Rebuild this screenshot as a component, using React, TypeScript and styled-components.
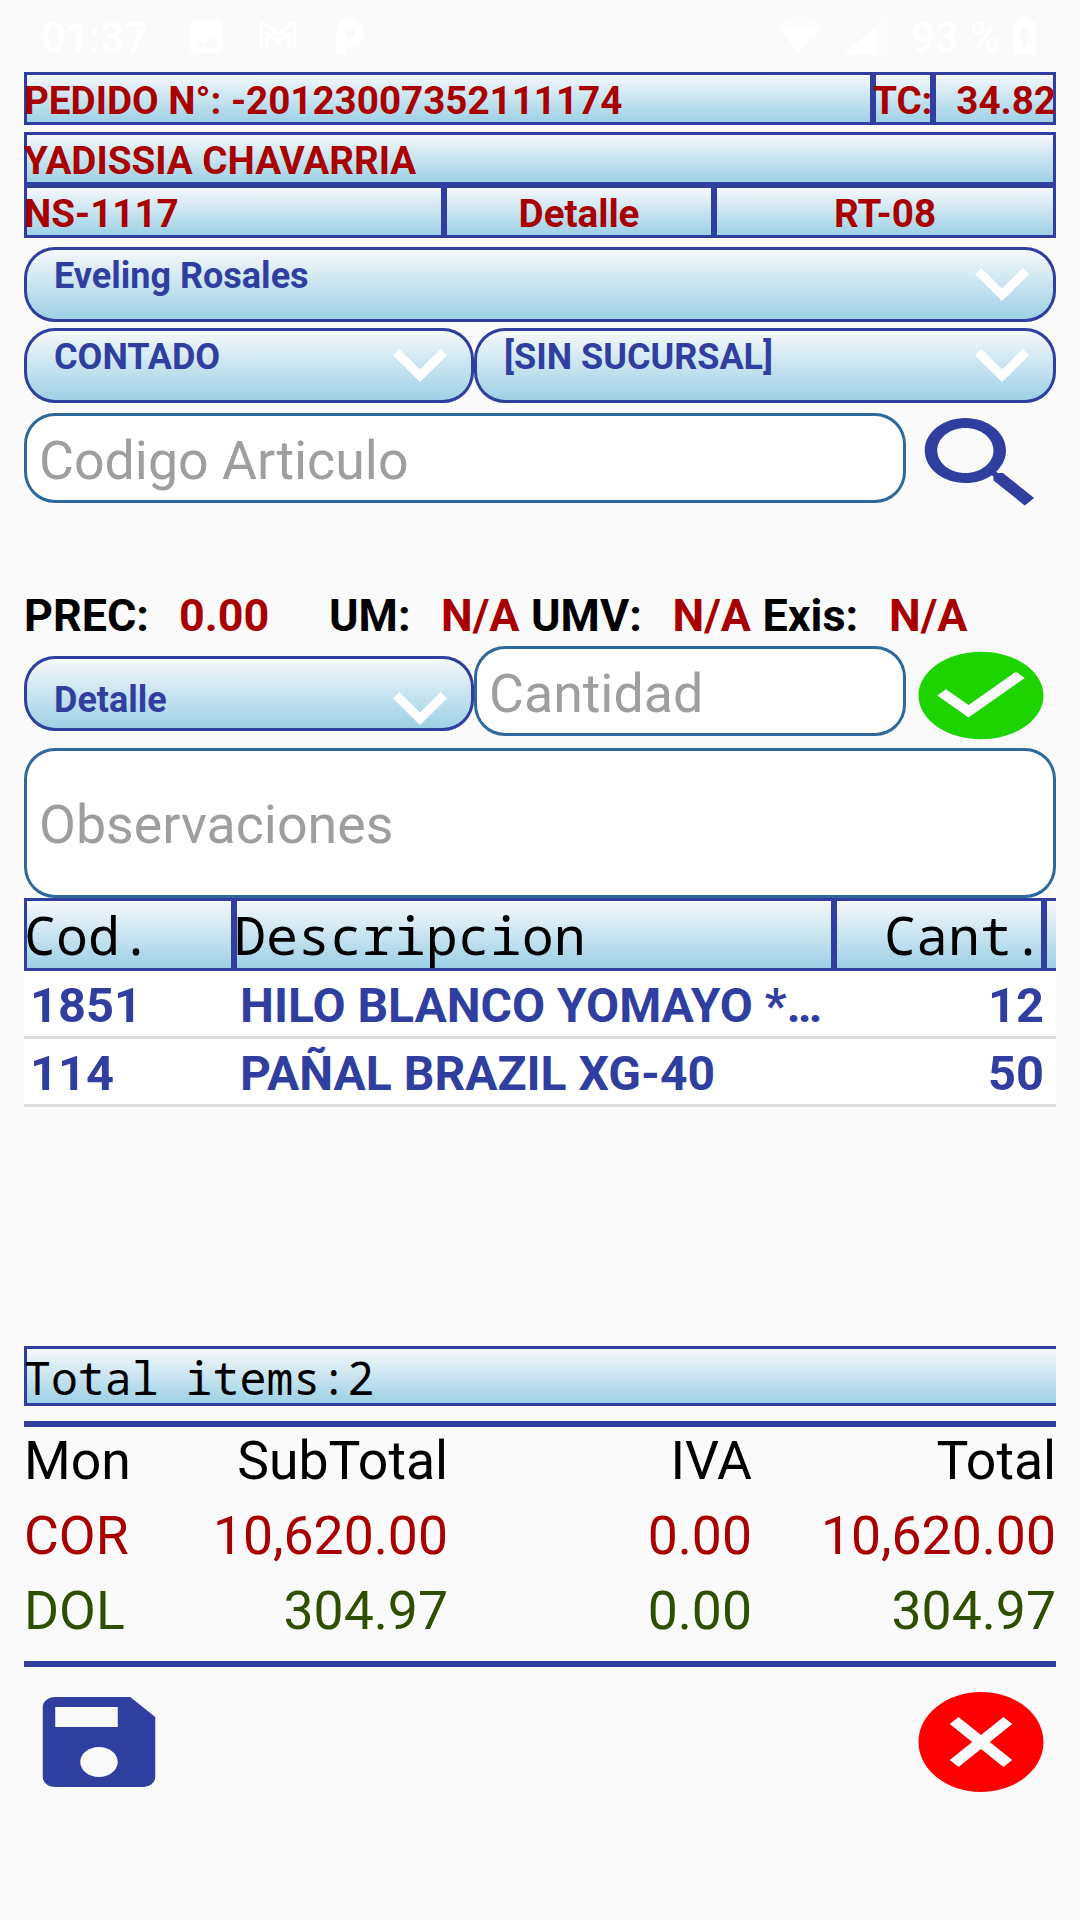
import React from 'react';
import styled, { createGlobalStyle } from 'styled-components';

const INDIGO = '#303f9f';
const STEEL = '#2f699b';
const RED = '#a80000';
const GREEN = '#2f4f00';
const PAPER = '#fafafa';
const GLOSS = 'linear-gradient(180deg, #fafafc 0%, #98cfe4 100%)';
const SANS = 'Roboto, "Liberation Sans", sans-serif';
const MONO = '"Noto Sans Mono", "Droid Sans Mono", "DejaVu Sans Mono", monospace';

const GlobalStyle = createGlobalStyle`
  *, *::before, *::after { box-sizing: border-box; }
  html, body { margin: 0; padding: 0; background: ${PAPER}; }
  svg { display: block; flex: none; }
`;

const Screen = styled.main`
  width: 1080px;
  height: 1920px;
  padding: 0 24px;
  overflow: hidden;
  display: flex;
  flex-direction: column;
  background: ${PAPER};
  font-family: ${SANS};
  color: #000;
  white-space: nowrap;
`;

/* ---------- status bar ---------- */

const StatusBar = styled.header`
  flex: none;
  height: 72px;
  padding: 0 20px 0 17.5px;
  display: flex;
  justify-content: space-between;
  color: #fff;
  font-size: 42.2px;
  font-weight: 500;
  line-height: 75px;
`;

const StatusGroup = styled.div`
  display: flex;
  align-items: flex-start;
`;

const StatusIcon = styled.svg<{ $top: number; $left: number }>`
  margin-top: ${(p) => p.$top}px;
  margin-left: ${(p) => p.$left}px;
`;

const Clock = styled.span`
  width: 108px;
`;

const Charge = styled.span`
  width: 90px;
  margin-left: 24px;
`;

/* ---------- glossy cells ---------- */

const CellRow = styled.div<{ $columns: string; $gap?: number }>`
  flex: none;
  display: grid;
  grid-template-columns: ${(p) => p.$columns};
  margin-top: ${(p) => p.$gap ?? 0}px;
`;

const Cell = styled.div<{ $align?: string }>`
  height: 53px;
  background: ${GLOSS};
  box-shadow: inset 0 0 0 3px ${INDIGO};
  color: ${RED};
  font-size: 38.6px;
  font-weight: 700;
  line-height: 58px;
  text-align: ${(p) => p.$align ?? 'left'};
`;

/* ---------- form ---------- */

const FormRow = styled.div<{ $gap: number; $height: number }>`
  flex: none;
  display: flex;
  align-items: flex-start;
  height: ${(p) => p.$height}px;
  margin-top: ${(p) => p.$gap}px;
`;

const Picker = styled.div<{ $width: number; $drop?: number }>`
  flex: none;
  width: ${(p) => p.$width}px;
  height: 75px;
  padding: ${(p) => p.$drop ?? 0}px 27px 0 30px;
  display: flex;
  justify-content: space-between;
  border-radius: 31px;
  background: ${GLOSS};
  box-shadow: inset 0 0 0 3px ${INDIGO};
  color: ${INDIGO};
  font-size: 36px;
  font-weight: 700;
  line-height: 58px;
`;

const Chevron = styled.svg`
  margin-top: 21px;
`;

const Field = styled.div<{ $width: number; $height: number; $line: number; $top?: number }>`
  flex: none;
  width: ${(p) => p.$width}px;
  height: ${(p) => p.$height}px;
  margin-top: ${(p) => p.$top ?? 0}px;
  padding-left: 15px;
  border-radius: 31px;
  background: #fff;
  box-shadow: inset 0 0 0 3px ${STEEL};
  color: #9e9e9e;
  font-size: 53.7px;
  line-height: ${(p) => p.$line}px;
`;

const IconButton = styled.button<{ $height: number }>`
  flex: none;
  width: 150px;
  height: ${(p) => p.$height}px;
  padding: 0;
  border: 0;
  background: none;
`;

const InfoRow = styled.div`
  flex: none;
  display: grid;
  grid-template-columns: 155px 150px 112px 90px 141.5px 90px 126.5px 1fr;
  margin-top: 68px;
  height: 50px;
  font-size: 44.9px;
  font-weight: 700;
  line-height: 50px;
`;

const InfoValue = styled.span`
  color: ${RED};
`;

/* ---------- article list ---------- */

const HeadCell = styled.div<{ $align?: string; $open?: boolean; $small?: boolean }>`
  height: ${(p) => (p.$small ? 60 : 73)}px;
  background: ${GLOSS};
  box-shadow: ${(p) =>
    p.$open
      ? `inset 3px 3px 0 ${INDIGO}, inset 0 -3px 0 ${INDIGO}`
      : `inset 0 0 0 3px ${INDIGO}`};
  font-family: ${MONO};
  font-size: ${(p) => (p.$small ? 44.9 : 53.3)}px;
  line-height: ${(p) => (p.$small ? 63 : 74)}px;
  text-align: ${(p) => p.$align ?? 'left'};
`;

const ItemList = styled.section`
  flex: none;
  height: 375px;
`;

const Item = styled.div`
  display: grid;
  grid-template-columns: 210px 600px 210px;
  height: 68px;
  width: 1032px;
  overflow: hidden;
  border-bottom: 3px solid #dcdcdc;
  background: #fff;
  color: ${INDIGO};
  font-weight: 700;
  line-height: 69px;
`;

const ItemCell = styled.span<{ $right?: boolean; $name?: boolean }>`
  padding-left: 6px;
  font-size: ${(p) => (p.$name ? 48 : 48.8)}px;
  ${(p) => p.$right && 'text-align: right;'}
`;

/* ---------- totals ---------- */

const Totals = styled.section`
  flex: none;
  height: 246px;
  margin-top: 15px;
  border-top: 6px solid ${INDIGO};
  border-bottom: 6px solid ${INDIGO};
`;

const TotalsRow = styled.div<{ $color: string }>`
  display: grid;
  grid-template-columns: 120px 304px 304px 304px;
  height: 75px;
  color: ${(p) => p.$color};
  font-size: 53.5px;
  line-height: 67px;
  text-align: right;

  & > :first-child {
    text-align: left;
  }
`;

const Actions = styled.footer`
  flex: none;
  display: flex;
  justify-content: space-between;
  margin-top: 15px;
`;

/* ---------- drawings ---------- */

const SEARCH =
  'M15.5 14h-.79l-.28-.27C15.41 12.59 16 11.11 16 9.5 16 5.91 13.09 3 9.5 3S3 5.91 3 9.5 5.91 16 9.5 16c1.61 0 3.09-.59 4.23-1.57l.27.28v.79l5 4.99L20.49 19l-4.99-5zm-6 0C7.01 14 5 11.99 5 9.5S7.01 5 9.5 5 14 7.01 14 9.5 11.99 14 9.5 14z';
const CHECK =
  'M12 2C6.48 2 2 6.48 2 12s4.48 10 10 10 10-4.48 10-10S17.52 2 12 2zm-2 15l-5-5 1.41-1.41L10 14.17l7.59-7.59L19 8l-9 9z';
const CANCEL =
  'M12 2C6.47 2 2 6.47 2 12s4.47 10 10 10 10-4.47 10-10S17.53 2 12 2zm5 13.59L15.59 17 12 13.41 8.41 17 7 15.59 10.59 12 7 8.41 8.41 7 12 10.59 15.59 7 17 8.41 13.41 12 17 15.59z';
const SAVE =
  'M17 3H5c-1.11 0-2 .9-2 2v14c0 1.1.89 2 2 2h14c1.1 0 2-.9 2-2V7l-4-4zm-5 16c-1.66 0-3-1.34-3-3s1.34-3 3-3 3 1.34 3 3-1.34 3-3 3zm3-10H5V5h10v4z';

function Action({ label, path, color, height }: { label: string; path: string; color: string; height: number }) {
  return (
    <IconButton $height={height} aria-label={label}>
      <svg width="150" height={height} viewBox="0 0 24 24" preserveAspectRatio="none">
        <path d={path} fill={color} />
      </svg>
    </IconButton>
  );
}

function Select({ value, width, drop }: { value: string; width: number; drop?: number }) {
  return (
    <Picker $width={width} $drop={drop}>
      <span>{value}</span>
      <Chevron width="54" height="33" viewBox="0 0 54 33">
        <path d="M0 6.3 6.3 0 27 20.4 47.7 0 54 6.3 27 33z" fill="#fff" />
      </Chevron>
    </Picker>
  );
}

function Status() {
  return (
    <StatusBar>
      <StatusGroup>
        <Clock>01:37</Clock>
        <StatusIcon $top={20} $left={40} width="33" height="33" viewBox="3 3 18 18">
          <path
            fill="#fff"
            fillRule="evenodd"
            d="M21 19V5c0-1.1-.9-2-2-2H5c-1.1 0-2 .9-2 2v14c0 1.1.9 2 2 2h14c1.1 0 2-.9 2-2zM8.5 13.5l2.5 3.01L14.5 12l4.5 6H5l3.5-4.5z"
          />
        </StatusIcon>
        <StatusIcon $top={21} $left={36} width="38" height="28" viewBox="0 0 38 28">
          <path
            d="M2 26V4.5q0-2.5 3-2.5l14 11.5L33 2q3 0 3 2.5V26h-6V12L19 21 8 12v14z"
            fill="none"
            stroke="#fff"
            strokeWidth="3.2"
            strokeLinejoin="round"
          />
        </StatusIcon>
        <StatusIcon $top={19} $left={39} width="28" height="36" viewBox="0 0 28 36">
          <path
            fill="#fff"
            fillRule="evenodd"
            d="M0 36V14C0 5 6 0 14 0s14 6 14 14-6 14-14 14h-4v5q0 3-3 3zM14 9a5 5 0 1 0 0 10 5 5 0 0 0 0-10z"
          />
        </StatusIcon>
      </StatusGroup>
      <StatusGroup>
        <StatusIcon $top={17} $left={0} width="46" height="36" viewBox="0 0 46 36">
          <path fill="#fff" fillOpacity="0.4" d="M23 36 0 8q10-8 23-8t23 8z" />
          <path fill="#fff" d="M23 36 5.5 14.5Q13 10 23 10t17.5 4.5z" />
        </StatusIcon>
        <StatusIcon $top={16} $left={21} width="44" height="39" viewBox="0 0 44 39">
          <path fill="#fff" fillOpacity="0.4" d="M0 39 44 0v39z" />
          <path fill="#fff" d="M0 39 33 10v29z" />
        </StatusIcon>
        <Charge>93 %</Charge>
        <StatusIcon $top={17} $left={12} width="23" height="38" viewBox="0 0 23 38">
          <path
            fill="#fff"
            fillRule="evenodd"
            d="M7 0h9v5h5q2 0 2 2v29q0 2-2 2H2q-2 0-2-2V7q0-2 2-2h5zM9 10 6 23h4v10l8-15h-5l4-8z"
          />
        </StatusIcon>
      </StatusGroup>
    </StatusBar>
  );
}

const info = [
  ['PREC:', '0.00'],
  ['UM:', 'N/A'],
  ['UMV:', 'N/A'],
  ['Exis:', 'N/A'],
];

const items = [
  { code: '1851', name: 'HILO BLANCO YOMAYO *…', count: '12' },
  { code: '114', name: 'PAÑAL BRAZIL XG-40', count: '50' },
];

const totals = [
  { color: '#000', cells: ['Mon', 'SubTotal', 'IVA', 'Total'] },
  { color: RED, cells: ['COR', '10,620.00', '0.00', '10,620.00'] },
  { color: GREEN, cells: ['DOL', '304.97', '0.00', '304.97'] },
];

export default function App() {
  return (
    <>
      <GlobalStyle />
      <Screen>
        <Status />

        <CellRow $columns="849px 60px 123px">
          <Cell>PEDIDO N°: -20123007352111174</Cell>
          <Cell>TC:</Cell>
          <Cell $align="right">34.82</Cell>
        </CellRow>
        <CellRow $columns="1032px" $gap={7}>
          <Cell>YADISSIA CHAVARRIA</Cell>
        </CellRow>
        <CellRow $columns="420px 270px 342px">
          <Cell>NS-1117</Cell>
          <Cell $align="center">Detalle</Cell>
          <Cell $align="center">RT-08</Cell>
        </CellRow>

        <FormRow $gap={9} $height={75}>
          <Select value="Eveling Rosales" width={1032} />
        </FormRow>
        <FormRow $gap={6} $height={75}>
          <Select value="CONTADO" width={450} />
          <Select value="[SIN SUCURSAL]" width={582} />
        </FormRow>
        <FormRow $gap={0} $height={120}>
          <Field $width={882} $height={90} $line={95} $top={10}>
            Codigo Articulo
          </Field>
          <Action label="Buscar" path={SEARCH} color={INDIGO} height={120} />
        </FormRow>

        <InfoRow>
          {info.map(([label, value]) => (
            <React.Fragment key={label}>
              <span>{label}</span>
              <InfoValue>{value}</InfoValue>
            </React.Fragment>
          ))}
        </InfoRow>

        <FormRow $gap={2} $height={105}>
          <FormRow $gap={13} $height={75}>
            <Select value="Detalle" width={450} drop={15} />
          </FormRow>
          <Field $width={432} $height={90} $line={95} $top={3}>
            Cantidad
          </Field>
          <Action label="Agregar" path={CHECK} color="#1dd300" height={105} />
        </FormRow>
        <Field $width={1032} $height={150} $line={154}>
          Observaciones
        </Field>

        <ItemList>
          <CellRow $columns="210px 600px 210px 12px">
            <HeadCell>Cod.</HeadCell>
            <HeadCell>Descripcion</HeadCell>
            <HeadCell $align="right">Cant.</HeadCell>
            <HeadCell $open />
          </CellRow>
          {items.map((item) => (
            <Item key={item.code}>
              <ItemCell>{item.code}</ItemCell>
              <ItemCell $name>{item.name}</ItemCell>
              <ItemCell $right>{item.count}</ItemCell>
            </Item>
          ))}
        </ItemList>

        <CellRow $columns="1032px" $gap={73}>
          <HeadCell $open $small>
            Total items:2
          </HeadCell>
        </CellRow>

        <Totals>
          {totals.map((row) => (
            <TotalsRow key={row.cells[0]} $color={row.color}>
              {row.cells.map((cell, i) => (
                <span key={i}>{cell}</span>
              ))}
            </TotalsRow>
          ))}
        </Totals>

        <Actions>
          <Action label="Guardar" path={SAVE} color={INDIGO} height={120} />
          <Action label="Cancelar" path={CANCEL} color="#ff0000" height={120} />
        </Actions>
      </Screen>
    </>
  );
}
